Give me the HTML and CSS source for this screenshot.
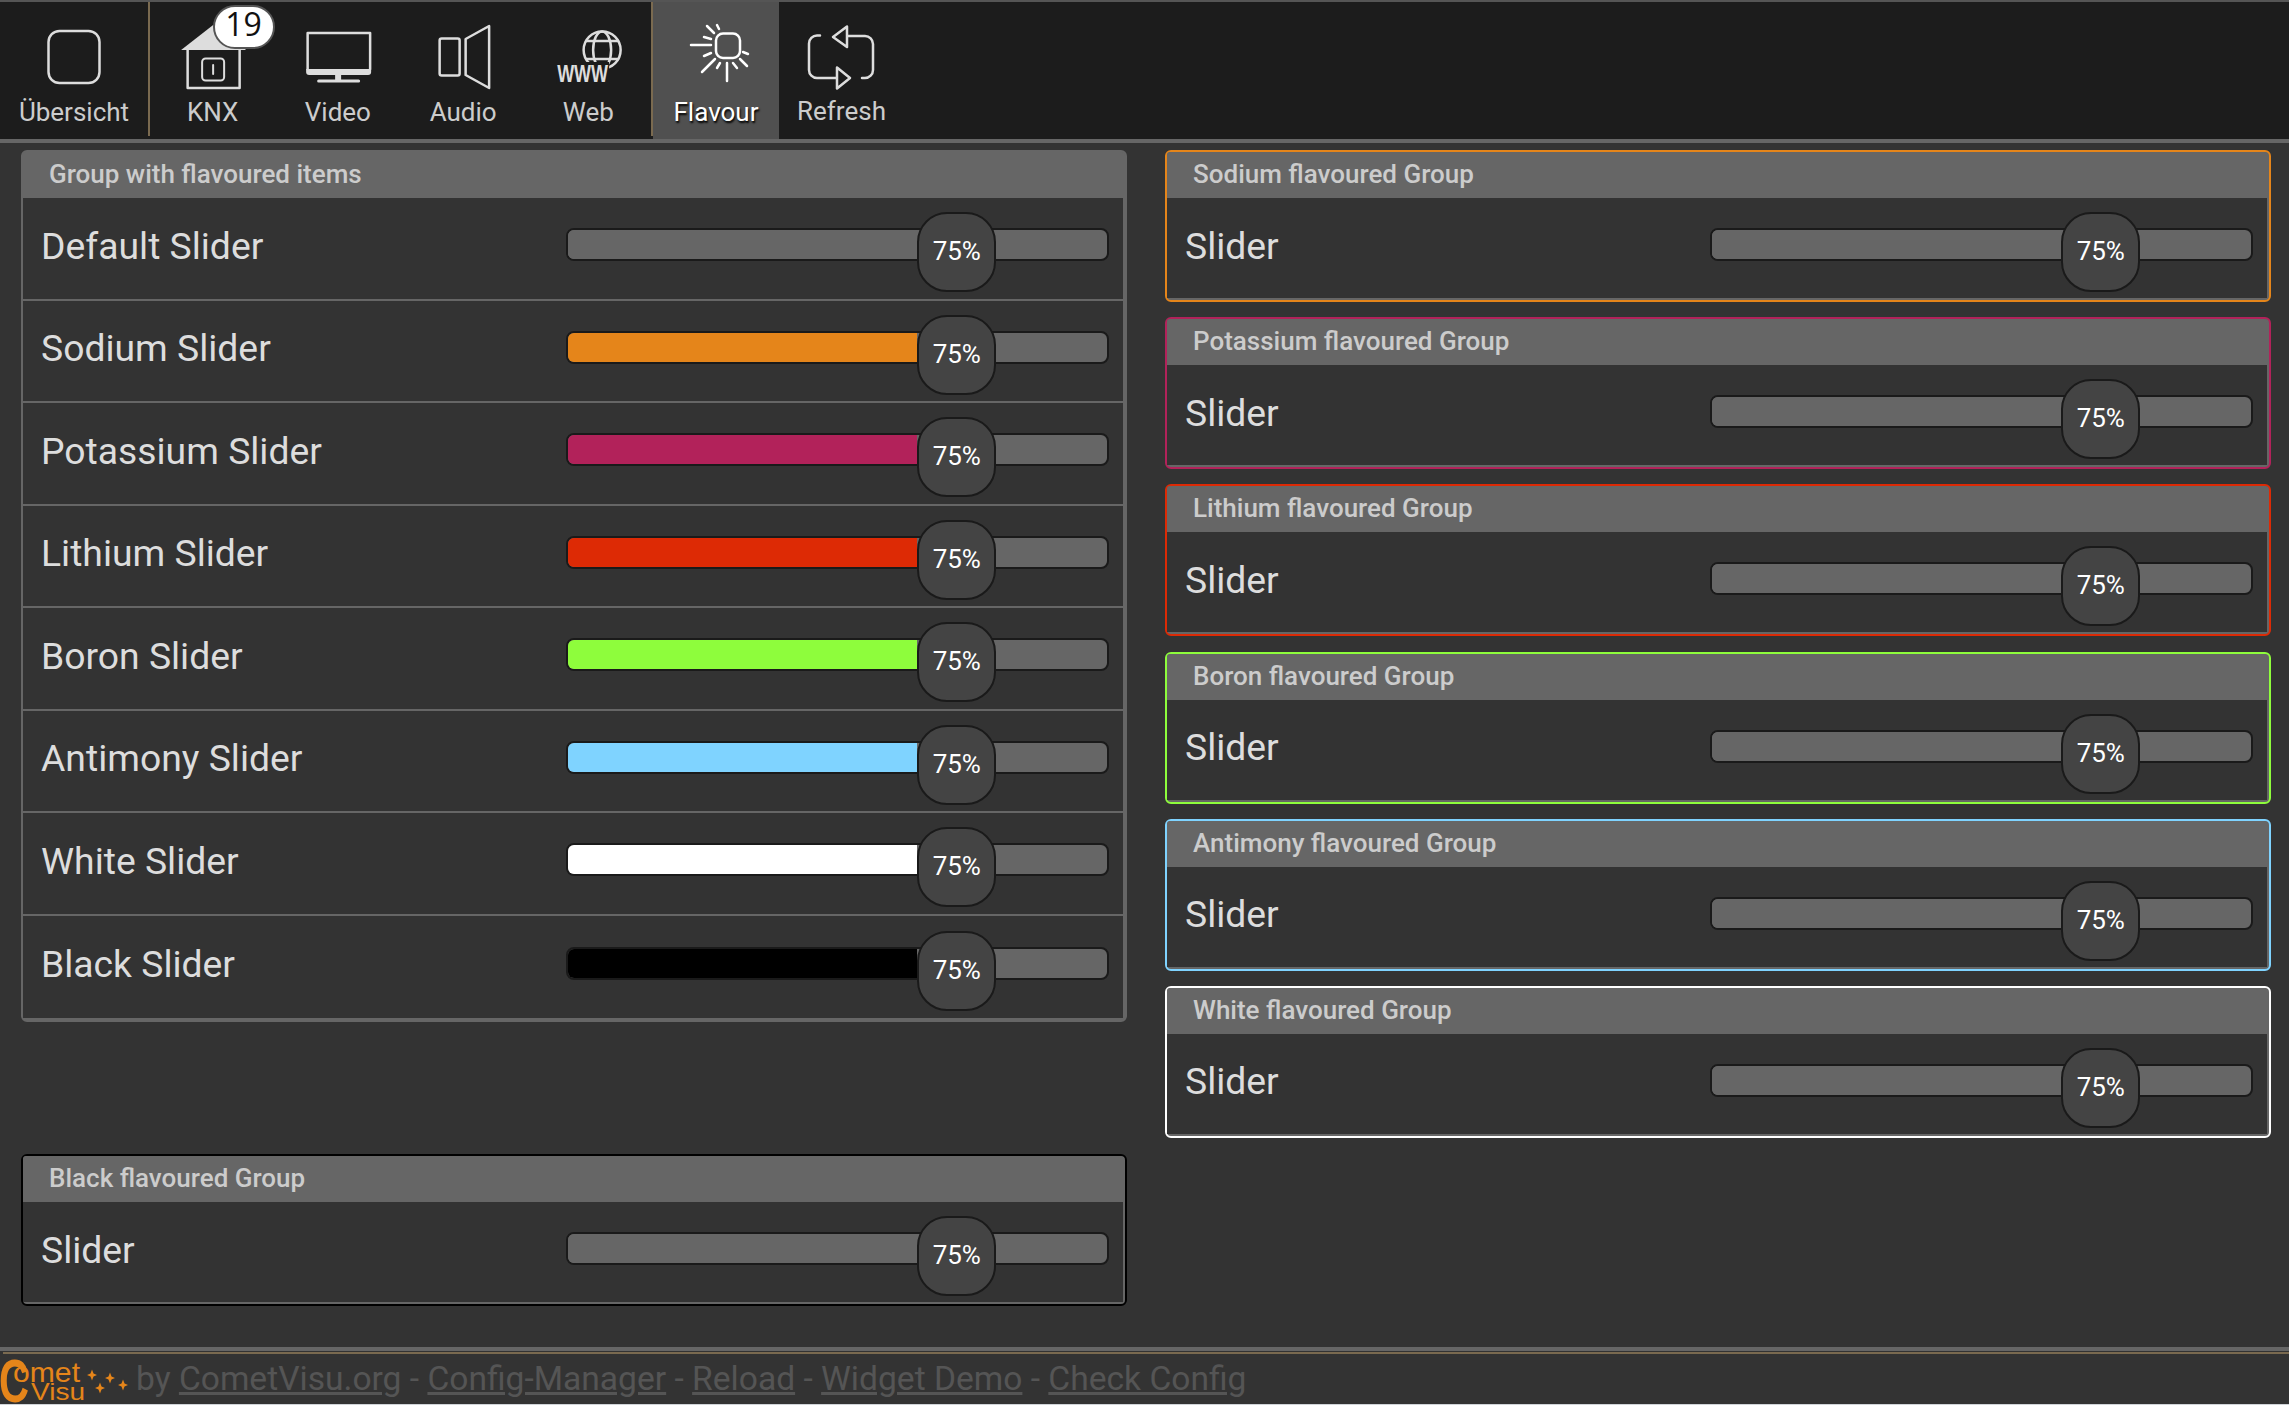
FILE: index.html
```html
<!DOCTYPE html>
<html lang="de">
<head>
<meta charset="utf-8">
<title>CometVisu Flavour</title>
<link rel="stylesheet" href="styles.css">
</head>
<body>
<div class="page">
<nav class="nav">
  <a class="nav-item first">
    <svg class="icon" viewBox="0 0 148 100"><rect class="ln" x="48.5" y="31" width="51" height="52" rx="11"/></svg>
    <span class="nav-label">Übersicht</span>
  </a>
  <span class="sep"></span>
  <a class="nav-item">
    <svg class="icon" viewBox="150 0 125 100">
      <path class="fl" d="M181 50 L213 25 L246 50 Z"/>
      <path class="ln" d="M187.500 50V88H239.500V50"/>
      <rect class="ln thin" x="202" y="58.500" width="22" height="22" rx="3.500"/>
      <path class="ln thin" d="M213 65V74"/>
    </svg>
    <span class="nav-label">KNX</span>
    <span class="badge">19</span>
  </a>
  <a class="nav-item">
    <svg class="icon" viewBox="275 0 125 100">
      <path class="ln" d="M307.500 69V33H370V69"/>
      <path class="fl" d="M306 69H371V72a3 3 0 0 1-3 3H309a3 3 0 0 1-3-3Z"/>
      <rect class="fl" x="335" y="75" width="6" height="5"/>
      <rect class="fl" x="317" y="79.500" width="43" height="3" rx="1.500"/>
    </svg>
    <span class="nav-label">Video</span>
  </a>
  <a class="nav-item">
    <svg class="icon" viewBox="400 0 125 100">
      <rect class="ln" x="438.500" y="38.500" width="20" height="37" rx="2"/>
      <path class="ln" d="M464.500 39L488 26V88L464.500 75Z"/>
    </svg>
    <span class="nav-label">Audio</span>
  </a>
  <a class="nav-item">
    <svg class="icon" viewBox="526 0 125 100">
      <circle class="ln" cx="602" cy="50" r="18.500"/>
      <ellipse class="ln" cx="602" cy="50" rx="9" ry="18.500"/>
      <path class="ln" d="M586 41H618M586 59H618"/>
      <rect class="knock" x="556" y="62" width="53" height="22"/>
      <text class="www" x="557" y="81.500" textLength="51" lengthAdjust="spacingAndGlyphs">WWW</text>
    </svg>
    <span class="nav-label">Web</span>
  </a>
  <span class="sep"></span>
  <a class="nav-item active">
    <svg class="icon" viewBox="653 0 126 100">
      <rect class="ln w" x="716" y="33.500" width="24" height="24.500" rx="7"/>
      <path class="ln w" d="M691 45H711M727 63V81M702 72L715 59M707 26L714 33M717 25L719 29M704 37L711 39M704 56L711 53M717 68L720 63M733 63L737 68M740 59L747 66M743 52L748 54"/>
    </svg>
    <span class="nav-label">Flavour</span>
  </a>
  <a class="nav-item">
    <svg class="icon" viewBox="779 0 126 100">
      <path class="ln" d="M820 35.500H817a8 8 0 0 0-8 8V70a8 8 0 0 0 8 8H837M837 67.500L850 78L837 88.500ZM847 26.500L833 37L847 47ZM847 36H865a8 8 0 0 1 8 8V70a8 8 0 0 1-8 8H862"/>
    </svg>
    <span class="nav-label refresh">Refresh</span>
  </a>
</nav>
<main class="main">
  <div class="col">
    <section class="group">
      <h2 class="title">Group with flavoured items</h2>
      <div class="row"><span class="label">Default Slider</span><div class="track"><div class="fill"></div><div class="handle">75%</div></div></div>
      <div class="row sodium"><span class="label">Sodium Slider</span><div class="track"><div class="fill"></div><div class="handle">75%</div></div></div>
      <div class="row potassium"><span class="label">Potassium Slider</span><div class="track"><div class="fill"></div><div class="handle">75%</div></div></div>
      <div class="row lithium"><span class="label">Lithium Slider</span><div class="track"><div class="fill"></div><div class="handle">75%</div></div></div>
      <div class="row boron"><span class="label">Boron Slider</span><div class="track"><div class="fill"></div><div class="handle">75%</div></div></div>
      <div class="row antimony"><span class="label">Antimony Slider</span><div class="track"><div class="fill"></div><div class="handle">75%</div></div></div>
      <div class="row white"><span class="label">White Slider</span><div class="track"><div class="fill"></div><div class="handle">75%</div></div></div>
      <div class="row black"><span class="label">Black Slider</span><div class="track"><div class="fill"></div><div class="handle">75%</div></div></div>
    </section>
    <section class="group small g-black low">
      <h2 class="title">Black flavoured Group</h2>
      <div class="row"><span class="label">Slider</span><div class="track"><div class="fill"></div><div class="handle">75%</div></div></div>
    </section>
  </div>
  <div class="col stack">
    <section class="group small g-sodium">
      <h2 class="title">Sodium flavoured Group</h2>
      <div class="row"><span class="label">Slider</span><div class="track"><div class="fill"></div><div class="handle">75%</div></div></div>
    </section>
    <section class="group small g-potassium">
      <h2 class="title">Potassium flavoured Group</h2>
      <div class="row"><span class="label">Slider</span><div class="track"><div class="fill"></div><div class="handle">75%</div></div></div>
    </section>
    <section class="group small g-lithium">
      <h2 class="title">Lithium flavoured Group</h2>
      <div class="row"><span class="label">Slider</span><div class="track"><div class="fill"></div><div class="handle">75%</div></div></div>
    </section>
    <section class="group small g-boron">
      <h2 class="title">Boron flavoured Group</h2>
      <div class="row"><span class="label">Slider</span><div class="track"><div class="fill"></div><div class="handle">75%</div></div></div>
    </section>
    <section class="group small g-antimony">
      <h2 class="title">Antimony flavoured Group</h2>
      <div class="row"><span class="label">Slider</span><div class="track"><div class="fill"></div><div class="handle">75%</div></div></div>
    </section>
    <section class="group small g-white">
      <h2 class="title">White flavoured Group</h2>
      <div class="row"><span class="label">Slider</span><div class="track"><div class="fill"></div><div class="handle">75%</div></div></div>
    </section>
  </div>
</main>
<footer class="footer">
  <svg class="logo" viewBox="0 0 130 48">
    <text class="logo-c" x="-1" y="46" textLength="30" lengthAdjust="spacingAndGlyphs">C</text>
    <text class="logo-t" x="13" y="26" textLength="67" lengthAdjust="spacingAndGlyphs">omet</text>
    <text class="logo-v" x="31" y="44" textLength="54" lengthAdjust="spacingAndGlyphs">Visu</text>
    <path class="star" d="M92 13.500l1.500 4 3.500 1.500-3.500 1.500-1.500 4-1.500-4-3.500-1.500 3.500-1.500ZM110 16.500l1.500 4 3.500 1.500-3.500 1.500-1.500 4-1.500-4-3.500-1.500 3.500-1.500ZM100 26.500l1.500 4 3.500 1.500-3.500 1.500-1.500 4-1.500-4-3.500-1.500 3.500-1.500ZM123 23.500l1.500 4 3.500 1.500-3.500 1.500-1.500 4-1.500-4-3.500-1.500 3.500-1.500Z"/>
  </svg>
  <span class="foot-text">by <a class="foot-link">CometVisu.org</a> - <a class="foot-link">Config-Manager</a> - <a class="foot-link">Reload</a> - <a class="foot-link">Widget Demo</a> - <a class="foot-link">Check Config</a></span>
</footer>
</div>
</body>
</html>
```
FILE: styles.css
```css
* { box-sizing: border-box; }
html, body { margin: 0; padding: 0; height: 100%; overflow: hidden; }
body { background: #333; font-family: Roboto, "Liberation Sans", sans-serif; color: #ddd; }
.page { height: 1405px; display: flex; flex-direction: column; }

.nav { height: 143px; flex: none; display: flex; align-items: flex-start; background: #1c1c1c; border-top: 2px solid #555; border-bottom: 4px solid #666; }
.nav-item { position: relative; width: 125.25px; height: 137px; flex: none; display: flex; flex-direction: column; align-items: center; color: #ccc; }
.nav-item.first { width: 148px; }
.nav-item.active { width: 126px; background: #505050; color: #fff; }
.nav-item:last-child { width: 126px; }
.sep { width: 2px; height: 134px; flex: none; background: #7a6a50; }
.icon { width: 100%; height: 100px; flex: none; display: block; margin-top: -2px; }
.nav-label { font-size: 26px; line-height: 30px; margin-top: -3px; white-space: nowrap; }
.nav-label.refresh { margin-top: -4px; margin-left: -1px; }
.active .nav-label { text-shadow: 1px 2px 2px #000; }
.ln { fill: none; stroke: #ddd; stroke-width: 2.5; stroke-linejoin: round; stroke-linecap: round; }
.ln.thin { stroke-width: 2; }
.ln.w { stroke: #fff; }
.fl { fill: #ddd; }
.knock { fill: #1c1c1c; }
.www { font-family: "Liberation Sans", sans-serif; font-weight: 700; font-size: 23px; fill: #ddd; }
.badge { position: absolute; left: 62.5px; top: 3px; width: 62px; height: 44px; border-radius: 22px; background: #fff; border: 2px solid #555; color: #111; font-family: "Open Sans", sans-serif; font-size: 32px; line-height: 33px; text-align: center; }

.main { flex: 1; display: grid; grid-template-columns: 1106px 1106px; column-gap: 38px; padding: 7px 18px 0 21px; }
.col { display: flex; flex-direction: column; }
.stack { gap: 15.2px; }
.group { border: 2px solid #666; border-radius: 6px; background: #666; padding: 0 2px 2px 0; }
.low { margin-top: 132px; }
.title { margin: 0; height: 46px; padding-left: 26px; background: #666; color: #ccc; font-size: 26px; font-weight: 500; line-height: 44px; border-radius: 3px 3px 0 0; }
.row { height: 102.5px; display: flex; align-items: center; padding: 0 14px 0 19px; border-bottom: 2px solid #666; background: #333; }
.row:last-child { border-bottom: 0; }
.small .row { height: 100px; }
.small .label { padding-bottom: 5px; }
.label { flex: 1; font-size: 37.3px; color: #ddd; line-height: 42px; padding-bottom: 5px; margin-left: -1px; }
.track { position: relative; width: 543px; height: 33px; margin-bottom: 7px; flex: none; border: 2px solid #1a1a1a; border-radius: 8px; background: #666; }
.small .track { margin-bottom: 7px; }
.fill { width: 64.8%; height: 100%; border-radius: 6px 0 0 6px; background: var(--accent, #666); }
.handle { position: absolute; left: 64.8%; top: -18px; width: 79px; height: 80px; border: 2px solid #1a1a1a; border-radius: 30px; background: #444; color: #fff; font-size: 26px; line-height: 75px; text-align: center; }

.sodium { --accent: #e5851a; }
.potassium { --accent: #b2225a; }
.lithium { --accent: #dd2a05; }
.boron { --accent: #8efd3c; }
.antimony { --accent: #7fd3ff; }
.white { --accent: #fff; }
.black { --accent: #000; }
.g-sodium { border-color: #e5851a; }
.g-potassium { border-color: #b2225a; }
.g-lithium { border-color: #dd2a05; }
.g-boron { border-color: #8efd3c; }
.g-antimony { border-color: #7fd3ff; }
.g-white { border-color: #fff; }
.g-black { border-color: #000; }

.footer { height: 58px; flex: none; display: flex; align-items: center; border-top: 4px solid #666; position: relative; border-bottom: 1px solid #d0d4d8; overflow: hidden; }
.footer::before { content: ""; position: absolute; left: 3px; right: 0; top: 1px; height: 2px; background: #7a6a50; }
.logo { width: 130px; height: 48px; flex: none; margin-top: 4px; margin-right: 6px; }
.logo-c { font-family: "Liberation Sans", sans-serif; font-weight: 700; font-size: 62px; fill: #e5851a; }
.logo-t { font-family: "Liberation Sans", sans-serif; font-size: 28px; fill: #e5851a; }
.logo-v { font-family: "Liberation Sans", sans-serif; font-size: 24px; fill: #e5851a; }
.star { fill: #e5851a; }
.foot-text { font-size: 33.6px; color: #555; white-space: nowrap; margin-top: 2px; }
.foot-link { text-decoration: underline; }
```
